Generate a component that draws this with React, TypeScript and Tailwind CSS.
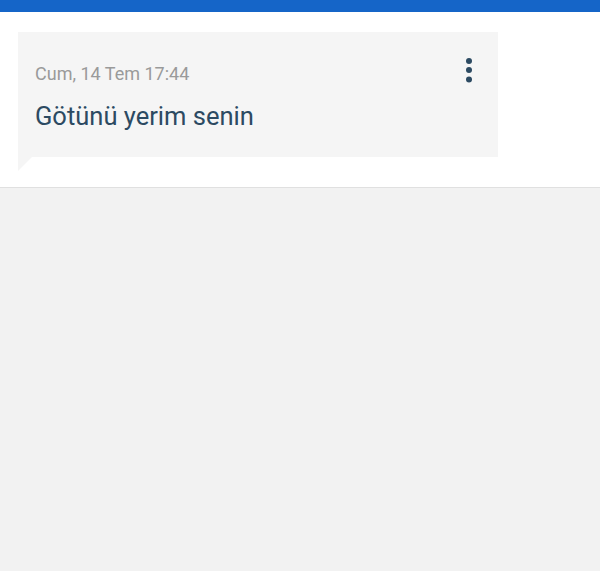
export default function App() {
  return (
    <div className="min-h-[571px] bg-[#f2f2f2] font-['Roboto',sans-serif]">
      <div className="h-3 bg-[#1565c8]" />
      <div className="bg-white pt-5 pb-4 px-[18px] border-b border-[#e0e0e0]">
        <div className="w-[480px] h-[125px] bg-[#f5f5f5] flex justify-between pl-[17px] pr-[23px] pt-[30px]">
          <div>
            <div className="text-[18px] leading-6 text-[#9a9a9a]">Cum, 14 Tem 17:44</div>
            <div className="mt-[14px] text-[25.5px] leading-8 text-[#2c4a62]">Götünü yerim senin</div>
          </div>
          <svg width="12" height="30" viewBox="0 0 12 30" className="-mt-[5px] text-[#2c4a62]">
            <circle cx="6" cy="4" r="3" fill="currentColor" />
            <circle cx="6" cy="13" r="3" fill="currentColor" />
            <circle cx="6" cy="22.5" r="3" fill="currentColor" />
          </svg>
        </div>
        <div className="w-[14px] h-[14px] bg-[#f5f5f5] [clip-path:polygon(0_0,100%_0,0_100%)]" />
      </div>
    </div>
  );
}
